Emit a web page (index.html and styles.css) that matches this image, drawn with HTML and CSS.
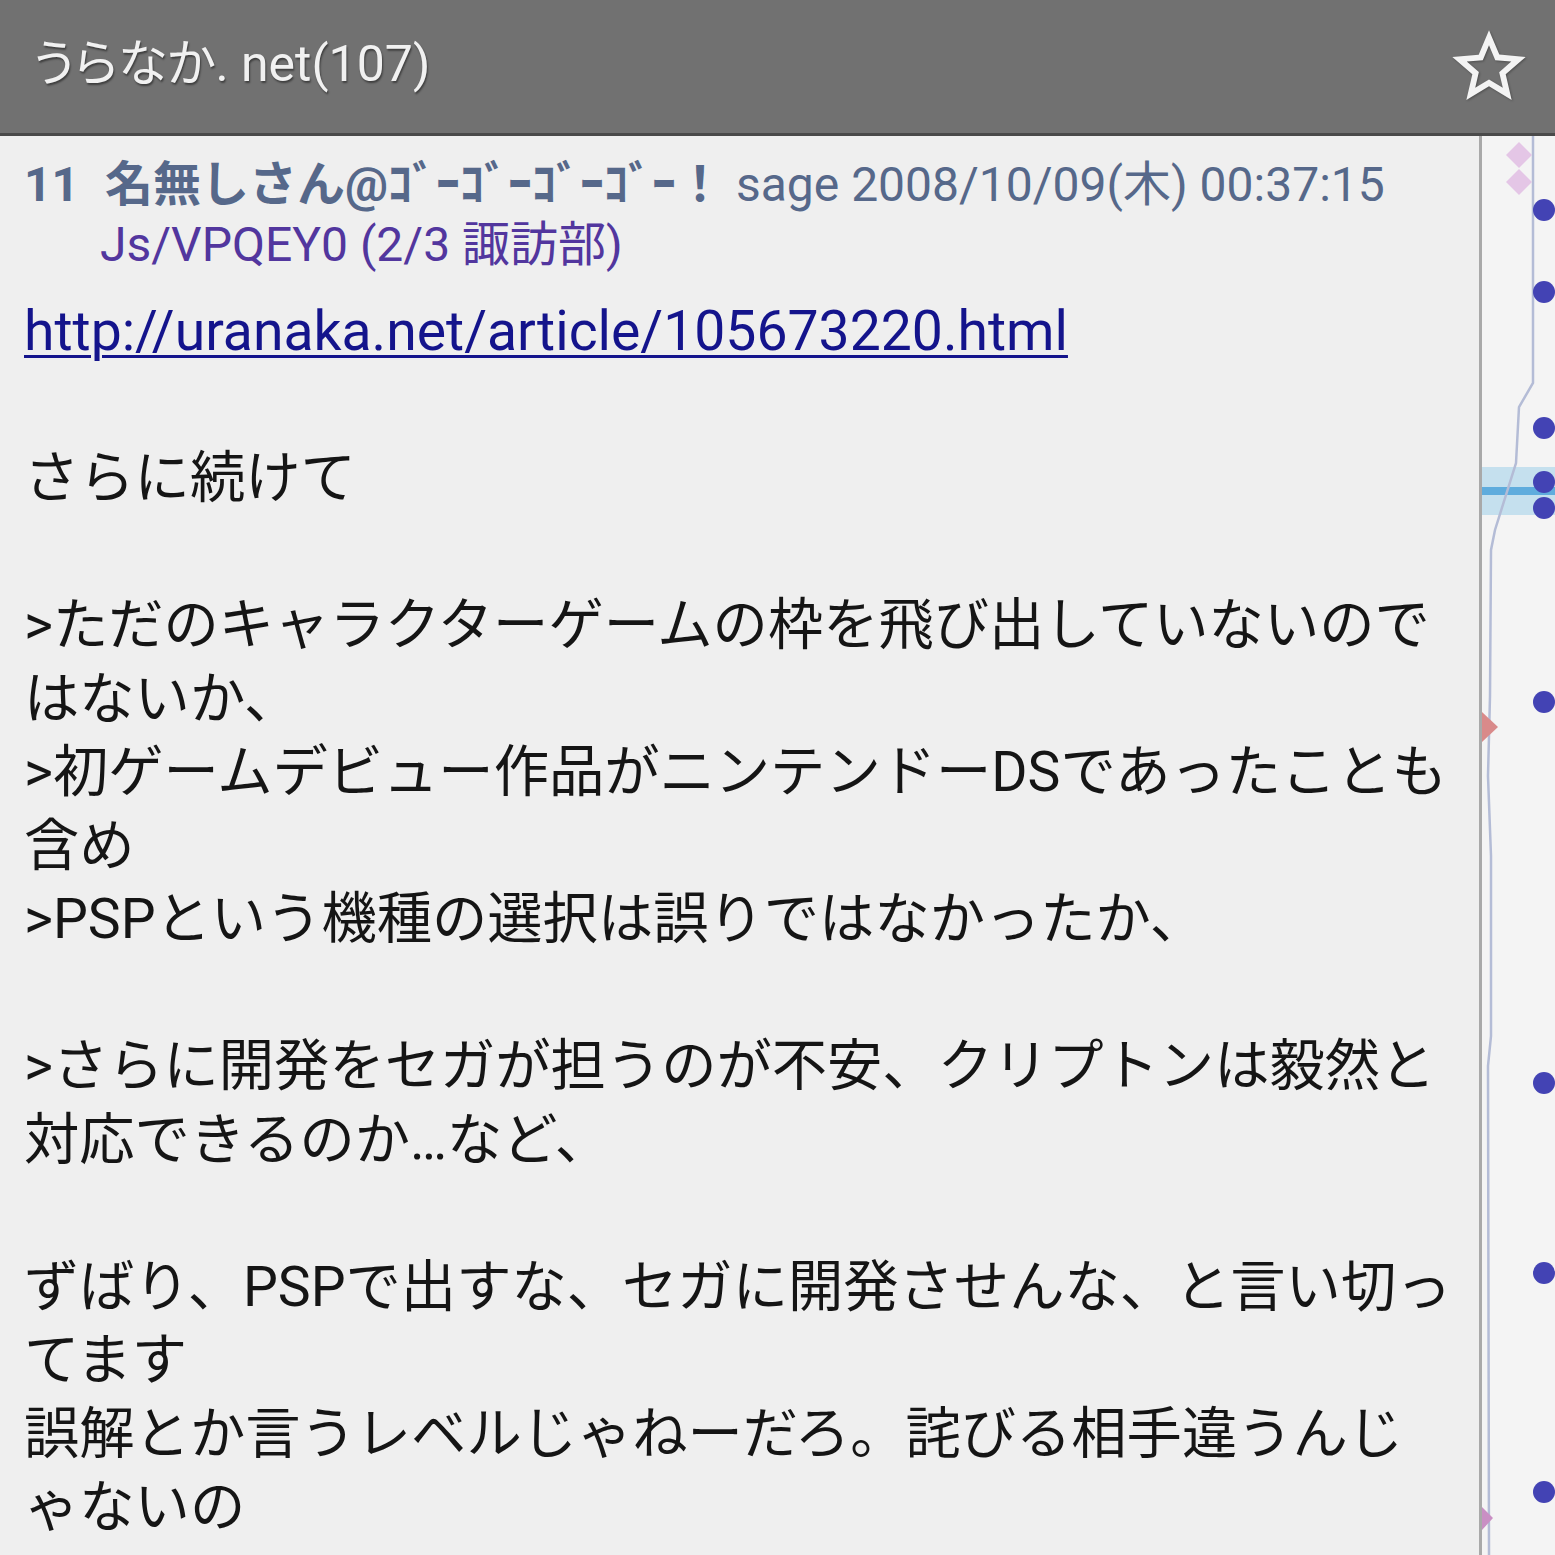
FILE: index.html
```html
<!DOCTYPE html>
<html lang="ja">
<head>
    <meta charset="UTF-8">
    <meta name="viewport" content="width=device-width, initial-scale=1.0">
    <title>うらなか. net(107)</title>
    <link rel="stylesheet" href="styles.css">
</head>
<body>

    <header class="app-bar">
        <h1 class="app-title">うらなか. net(107)</h1>
        <!-- Bookmark -->
        <svg class="star" viewBox="0 0 24 24" width="88" height="88">
            <path d="M22 9.24l-7.19-.62L12 2 9.19 8.63 2 9.24l5.46 4.73L5.82 21 12 17.27 18.18 21l-1.63-7.03L22 9.24zM12 15.4l-3.76 2.27 1-4.28-3.32-2.88 4.38-.38L12 6.1l1.71 4.04 4.38.38-3.32 2.88 1 4.28L12 15.4z"/>
        </svg>
    </header>

    <div class="main">
        <div class="thread">
            <div class="post">
                <div class="post-head">
                    <span class="num">11</span>
                    <span class="name">名無しさん@ｺﾞｰｺﾞｰｺﾞｰｺﾞｰ！</span>
                    <span class="meta">sage 2008/10/09(木) 00:37:15</span>
                    <div class="post-id">Js/VPQEY0 (2/3 諏訪部)</div>
                </div>
                <div class="post-body">
                    <a href="#">http://uranaka.net/article/105673220.html</a><br>
                    <br>
                    さらに続けて<br>
                    <br>
                    &gt;ただのキャラクターゲームの枠を飛び出していないのではないか、<br>
                    &gt;初ゲームデビュー作品がニンテンドーDSであったことも含め<br>
                    &gt;PSPという機種の選択は誤りではなかったか、<br>
                    <br>
                    &gt;さらに開発をセガが担うのが不安、クリプトンは毅然と対応できるのか…など、<br>
                    <br>
                    ずばり、PSPで出すな、セガに開発させんな、と言い切ってます<br>
                    誤解とか言うレベルじゃねーだろ。詫びる相手違うんじゃないの
                </div>
            </div>
        </div>

        <!-- Thread map: one mark per post -->
        <div class="minimap">
            <svg class="map" viewBox="0 0 75 1419" width="75" height="1419">
                <rect class="band" x="0" y="331" width="75" height="48"/>
                <rect class="band-line" x="0" y="351" width="75" height="8"/>
                <path class="trace" d="M51 0 L51 247 L37 271 L34 327 L13 394 L9 414 L8 560 L6 640 L9 720 L9 900 L6 930 L7 1419"/>
                <path class="kiss" d="M37 6 L50 19 L37 32 L24 19 Z"/>
                <path class="kiss" d="M37 33 L50 46 L37 59 L24 46 Z"/>
                <circle class="dot" cx="62" cy="74" r="11"/>
                <circle class="dot" cx="62" cy="156" r="11"/>
                <circle class="dot" cx="62" cy="292" r="11"/>
                <circle class="dot" cx="62" cy="346" r="11"/>
                <circle class="dot" cx="62" cy="372" r="11"/>
                <circle class="dot" cx="62" cy="566" r="11"/>
                <circle class="dot" cx="62" cy="947" r="11"/>
                <circle class="dot" cx="62" cy="1137" r="11"/>
                <circle class="dot" cx="62" cy="1356" r="11"/>
                <path class="mark-red" d="M0 576 L16 591 L0 606 Z"/>
                <path class="mark-pink" d="M0 1371 L11 1382 L0 1394 Z"/>
            </svg>
        </div>
    </div>

</body>
</html>
```

FILE: styles.css
```css
body {
    margin: 0;
    padding: 0;
    background-color: #efefef;
    font-family: Roboto, "Noto Sans CJK JP", sans-serif;
    color: #151515;
    overflow: hidden;
}

/* Top bar */
.app-bar {
    height: 133px;
    background-color: #717171;
    border-bottom: 3px solid #4a4a4a;
    display: flex;
    align-items: center;
    justify-content: space-between;
    padding: 0 22px 0 33px;
}

.app-title {
    margin: 0 0 16px 0;
    font-size: 50px;
    font-weight: normal;
    color: #f1f1f1;
    font-feature-settings: "palt";
    text-shadow: 1px 2px 2px rgba(0, 0, 0, 0.45);
}

.star {
    fill: #f4f4f4;
    filter: drop-shadow(1px 1px 1px rgba(0, 0, 0, 0.3));
}

/* Content + thread map side by side */
.main {
    display: flex;
    height: 1419px;
}

.thread {
    flex: 1;
    padding: 19px 21px 0 24px;
}

.post-head {
    font-size: 48px;
    line-height: 60px;
    color: #56688a;
}

.num {
    font-weight: bold;
    margin-right: 14px;
}

.name {
    font-weight: bold;
}

.post-id {
    padding-left: 76px;
    color: #52369e;
}

.post-body {
    margin-top: 20px;
    font-size: 55.3px;
    line-height: 73.5px;
    line-break: loose;
}

.post-body a {
    color: #14148c;
    text-decoration: underline;
    text-decoration-thickness: 3px;
    text-underline-offset: 5px;
}

.minimap {
    width: 73px;
    border-left: 3px solid #a9a9a9;
    background-color: #f4f4f4;
    position: relative;
    overflow: hidden;
}

.map {
    display: block;
}

.band {
    fill: rgba(110, 185, 225, 0.35);
}

.band-line {
    fill: rgba(60, 155, 215, 0.75);
}

.trace {
    fill: none;
    stroke: #b4bcd6;
    stroke-width: 2.5;
}

.kiss {
    fill: #e4c6e6;
}

.dot {
    fill: #4343b4;
}

.mark-red {
    fill: #d98a8a;
}

.mark-pink {
    fill: #c98fc4;
}
```
